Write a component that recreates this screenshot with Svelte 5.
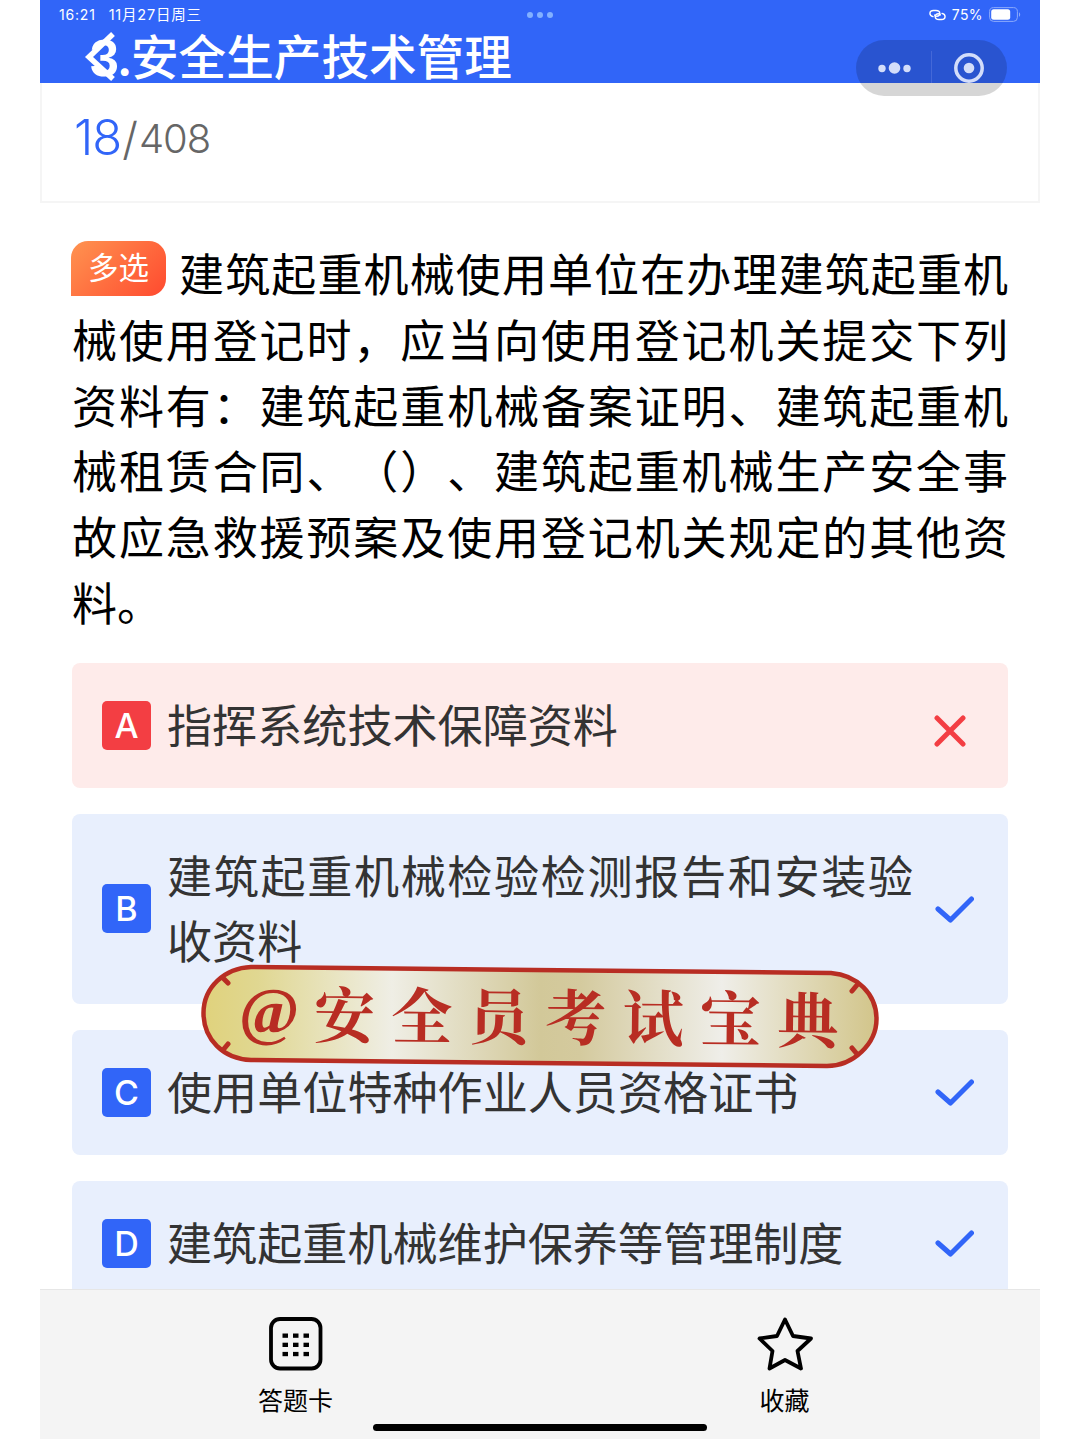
<script lang="ts">
  interface Option {
    key: string;
    text: string;
    correct: boolean;
  }

  const title = '安全生产技术管理';
  const current = 18;
  const total = 408;

  const question =
    '建筑起重机械使用单位在办理建筑起重机械使用登记时，应当向使用登记机关提交下列资料有：建筑起重机械备案证明、建筑起重机械租赁合同、（）、建筑起重机械生产安全事故应急救援预案及使用登记机关规定的其他资料。';

  const options: Option[] = [
    { key: 'A', text: '指挥系统技术保障资料', correct: false },
    { key: 'B', text: '建筑起重机械检验检测报告和安装验收资料', correct: true },
    { key: 'C', text: '使用单位特种作业人员资格证书', correct: true },
    { key: 'D', text: '建筑起重机械维护保养等管理制度', correct: true }
  ];

  const dots = [0, 1, 2];
</script>

<div class="screen">
  <header>
    <div class="status">
      <span class="time">16:21</span>
      <span class="date">11月27日周三</span>
      <span class="percent-group">
        <svg class="link" width="17" height="12" viewBox="0 0 18 12" fill="none" stroke="#fff" stroke-width="1.5" stroke-linecap="round">
          <path d="M4.2 7.7C2.2 7.2 1 6 1 4.5 1 2.7 2.5 1.3 4.8 1.3h2.600c2.300 0 4 1.300 4 3.200 0 1.600-1.400 2.800-3.200 2.800-1.200 0-2-.5-2.200-1.200" />
          <path d="M13.800 4.300c2 .5 3.200 1.700 3.200 3.200 0 1.800-1.500 3.200-3.800 3.200h-2.600c-2.300 0-4-1.300-4-3.200 0-1.600 1.400-2.800 3.200-2.800 1.200 0 2 .5 2.200 1.200" />
        </svg>
        <span>75%</span>
        <svg width="32" height="15" viewBox="0 0 32 15">
          <rect x="0.600" y="0.600" width="27.800" height="13.800" rx="4" fill="none" stroke="#8ba9fb" />
          <rect x="2.200" y="2.200" width="19" height="10.600" rx="2.500" fill="#fff" />
          <path d="M30 5.200c1.600.8 1.600 3.800 0 4.600z" fill="#8ba9fb" />
        </svg>
      </span>
      <span class="multitask">
        {#each dots as dot (dot)}<i></i>{/each}
      </span>
    </div>
    <h1><span class="number">3<i>.</i></span>{title}</h1>
    <svg class="back" width="32" height="54" viewBox="0 0 32 54" fill="none" stroke="#fff" stroke-width="5.500">
      <path d="M29 4 5 27l24 22" />
    </svg>
    <div class="capsule">
      <svg width="151" height="56" viewBox="0 0 151 56" fill="#d3ddfa">
        <circle cx="26" cy="28.500" r="3.700" />
        <circle cx="38.500" cy="28" r="5.800" />
        <circle cx="51" cy="28.500" r="3.700" />
        <path d="M75.500 11v32" stroke="#4468d8" />
        <circle cx="113" cy="28" r="13.200" fill="none" stroke="#d3ddfa" stroke-width="3.500" />
        <circle cx="113" cy="28" r="5.300" />
      </svg>
    </div>
  </header>

  <section class="progress">
    <span class="current">{current}</span><span class="slash">/</span><span class="total">{total}</span>
  </section>

  <main>
    <p class="question"><span class="tag">多选</span>{question}</p>

    <div class="options">
      {#each options as option (option.key)}
        <div class="option" class:wrong={!option.correct}>
          <span class="key">{option.key}</span>
          <span class="text">{option.text}</span>
          {#if option.correct}
            <svg class="mark" width="40" height="28" viewBox="0 0 40 28">
              <path d="m4 14 12.500 11L37.500 4" />
            </svg>
          {:else}
            <svg class="mark cross" width="32" height="32" viewBox="0 0 32 32">
              <path d="m3 3 26 26M29 3 3 29" />
            </svg>
          {/if}
        </div>
      {/each}
    </div>
  </main>

  <footer>
    <div class="tab">
      <svg width="54" height="54" viewBox="0 0 54 54">
        <rect x="2" y="2" width="49.500" height="49.500" rx="9" fill="none" stroke="#000" stroke-width="3.800" />
        {#each [17, 26.2, 35.400] as y}
          {#each [13.500, 24, 34.500] as x}
            <rect {x} y={y - 0.500} width="5.500" height="4.300" />
          {/each}
        {/each}
      </svg>
      <span>答题卡</span>
    </div>
    <div class="tab">
      <svg width="56" height="54" viewBox="0 0 56 54" fill="none" stroke="#000" stroke-width="3.800" stroke-linejoin="round">
        <path d="m28 2.500 8 16.500 18 2.500-13.500 12.500L44 51.500 28 43 12.500 51.500 15.500 34 2.500 21.500 20 19z" />
      </svg>
      <span>收藏</span>
    </div>
    <div class="home-bar"></div>
  </footer>

  <div class="banner">
    <svg width="678" height="106" viewBox="0 0 678 106">
      <defs>
        <linearGradient id="gold">
          <stop offset="0" stop-color="#e0d27c" />
          <stop offset="0.080" stop-color="#e0d791" />
          <stop offset="0.280" stop-color="#efeee5" />
          <stop offset="0.500" stop-color="#d2c899" />
          <stop offset="0.560" stop-color="#d4ca9e" />
          <stop offset="0.770" stop-color="#efeee9" />
          <stop offset="1" stop-color="#d2c58a" />
        </linearGradient>
      </defs>
      <g stroke="#b82d23" stroke-width="4.500" stroke-linecap="round">
        <path d="M50 3 630 9C656 11 675.500 30 675.500 55S652 102 626 102L50 96C22 95 2.500 75 2.500 49S24 4 50 3z" fill="url(#gold)" />
        <path d="m22 14 5 5M22 86l5-6M656 21l-5 6M656 90l-5-6" stroke-width="5" />
      </g>
    </svg>
    <span class="banner-text"><b>@</b>安全员考试宝典</span>
  </div>
</div>

<style>
  :global(body) {
    background: #fff;
  }

  .screen {
    position: relative;
    display: flex;
    flex-direction: column;
    width: 1000px;
    height: 1439px;
    margin: 0 auto;
    overflow: hidden;
    font-family: Inter, 'Noto Sans CJK SC', sans-serif;
    text-spacing-trim: space-all;
    color: #000;
  }

  header {
    position: relative;
    flex: none;
    height: 83px;
    background: #3165f8;
    color: #fff;
  }

  .status {
    position: relative;
    display: flex;
    align-items: center;
    height: 29px;
    padding: 0 19px;
    font-size: 14px;
    letter-spacing: 0.8px;
  }

  .date {
    margin-left: 13px;
    font-size: 14.5px;
    letter-spacing: 0.8px;
    line-height: 20px;
  }

  .percent-group {
    display: flex;
    align-items: center;
    gap: 6px;
    margin-left: auto;
    letter-spacing: 0.4px;
  }

  .multitask {
    position: absolute;
    top: 12px;
    left: 487px;
    display: flex;
    gap: 4px;
  }

  .multitask i {
    width: 6px;
    height: 6px;
    border-radius: 50%;
    background: #82b0ff;
  }

  h1 {
    display: flex;
    margin: 0;
    padding: 2px 0 0 50px;
    font-size: 47.6px;
    font-weight: 500;
    line-height: 54px;
    white-space: nowrap;
  }

  .number {
    width: 41px;
    font-family: 'Liberation Sans', sans-serif;
    font-size: 52px;
    font-weight: 700;
    letter-spacing: -2px;
  }

  .number i {
    font-family: Inter, sans-serif;
    font-style: normal;
    font-size: 46px;
  }

  .back {
    position: absolute;
    top: 30px;
    left: 44px;
  }

  .capsule {
    position: absolute;
    top: 40px;
    left: 816px;
    z-index: 1;
    width: 151px;
    height: 56px;
    border-radius: 28px;
    background: rgba(0, 0, 0, 0.16);
  }

  .progress {
    box-sizing: border-box;
    flex: none;
    display: flex;
    align-items: baseline;
    height: 120px;
    padding: 28px 32px 0;
    border: 2px solid #f5f5f5;
    border-top: none;
    line-height: 54px;
    font-weight: 300;
    color: #666;
  }

  .current {
    font-size: 49px;
    letter-spacing: -1px;
    color: #3165f8;
  }

  .slash {
    margin: 0 1px 0 1px;
    font-size: 45px;
  }

  .total {
    position: relative;
    top: -2px;
    font-size: 40px;
    letter-spacing: -1px;
  }

  main {
    flex: 1;
    min-height: 0;
    padding: 40px 32px 0;
    overflow: hidden;
  }

  .question {
    margin: 0;
    font-size: 45px;
    line-height: 65.8px;
    text-align: justify;
  }

  .tag {
    display: inline-block;
    width: 95px;
    height: 55px;
    margin: -10px 12px 0 -1px;
    border-radius: 17px 17px 17px 0;
    background: linear-gradient(135deg, #ff9350, #ff4a2f);
    color: #fff;
    font-size: 30.5px;
    line-height: 54px;
    text-align: center;
    vertical-align: 13px;
  }

  .options {
    display: flex;
    flex-direction: column;
    gap: 26px;
    margin-top: 25px;
  }

  .option {
    display: flex;
    align-items: center;
    padding: 30px 33px 30px 30px;
    border-radius: 8px;
    background: #e8effd;
  }

  .option.wrong {
    background: #feebea;
  }

  .key {
    flex: none;
    width: 49px;
    height: 49px;
    border-radius: 5px;
    background: #3165f8;
    color: #fff;
    font-size: 34px;
    font-weight: 500;
    line-height: 49px;
    text-align: center;
  }

  .wrong .key {
    background: #f33e43;
  }

  .text {
    position: relative;
    top: 1px;
    width: 746px;
    margin: 0 21px 0 16px;
    font-size: 45.1px;
    line-height: 65px;
    text-align: justify;
    color: #333;
  }

  .mark {
    flex: none;
    fill: none;
    stroke: #3165f8;
    stroke-width: 5;
    stroke-linecap: round;
    stroke-linejoin: round;
  }

  .cross {
    margin-top: 11px;
    stroke: #f33e43;
  }

  footer {
    position: relative;
    box-sizing: border-box;
    flex: none;
    display: flex;
    height: 150px;
    padding: 27px 0 0 11px;
    border-top: 1px solid #e6e6e6;
    background: #f4f4f4;
  }

  .tab {
    display: flex;
    flex-direction: column;
    align-items: center;
    gap: 12px;
    width: 489px;
    font-size: 25px;
    line-height: 36px;
  }

  .home-bar {
    position: absolute;
    bottom: 8px;
    left: 333px;
    width: 334px;
    height: 7px;
    border-radius: 4px;
    background: #000;
  }

  .banner {
    position: absolute;
    top: 964px;
    left: 161px;
    width: 678px;
    height: 106px;
  }

  .banner-text {
    position: absolute;
    top: 8px;
    left: 38px;
    display: flex;
    font-family: 'Noto Serif CJK SC', 'Noto Sans CJK SC', serif;
    font-size: 61px;
    font-weight: 700;
    line-height: 84px;
    letter-spacing: 16.2px;
    white-space: nowrap;
    color: #b82d23;
    transform: rotate(0.6deg);
  }

  .banner-text b {
    width: 75px;
    font-family: 'Liberation Serif', serif;
    font-size: 65px;
    letter-spacing: 0;
  }
</style>
